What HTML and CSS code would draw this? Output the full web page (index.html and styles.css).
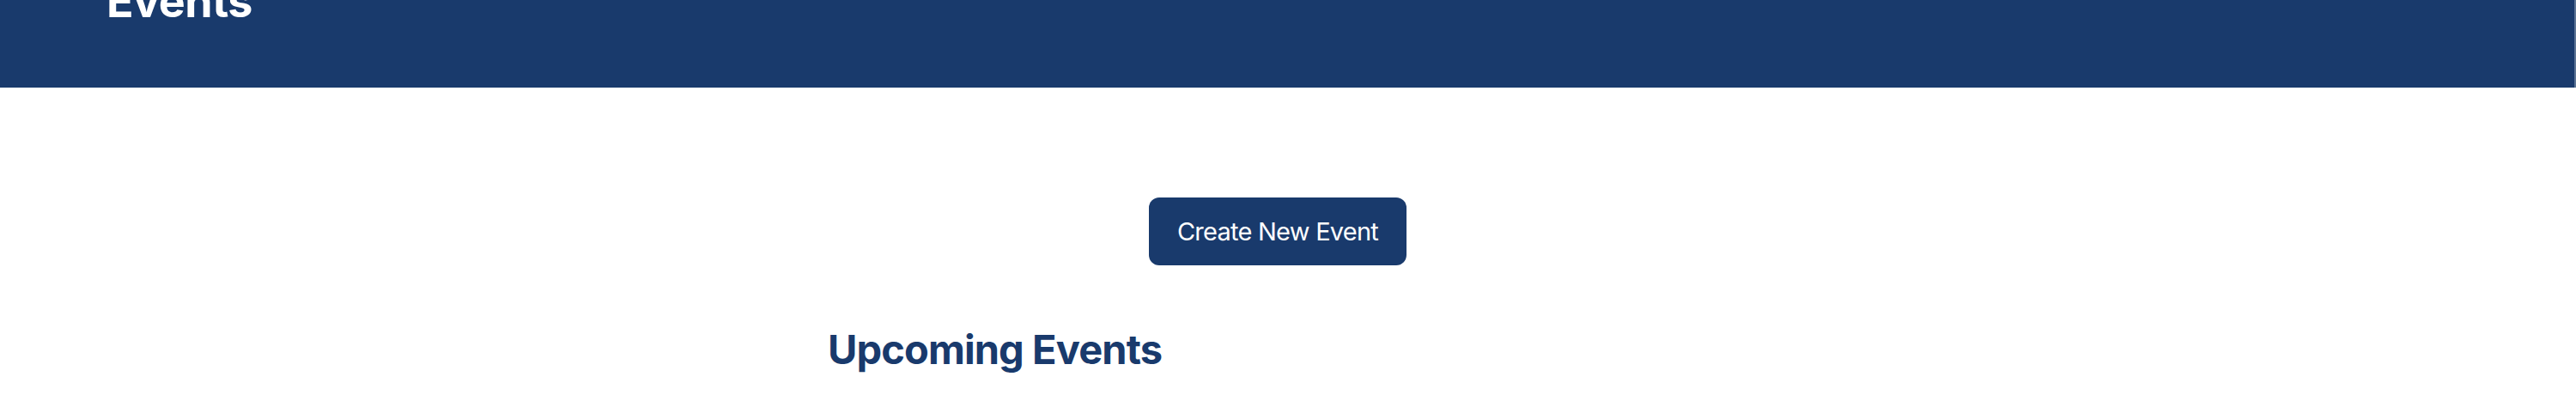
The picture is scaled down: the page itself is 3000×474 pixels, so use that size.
FILE: index.html
```html
<!DOCTYPE html>
<html>
<head>
<meta charset="utf-8">
<link rel="stylesheet" href="styles.css">
</head>
<body>
<header class="topbar">
  <h1 class="brand">Events</h1>
</header>
<main class="page">
  <div class="actions">
    <button class="btn-primary">Create New Event</button>
  </div>
  <section class="list">
    <h2 class="list-title">Upcoming Events</h2>
  </section>
</main>
</body>
</html>
```
FILE: styles.css
```css
html, body {
  margin: 0;
  padding: 0;
  background: #ffffff;
  font-family: Inter, "Noto Sans", sans-serif;
  overflow: hidden;
}
.topbar {
  height: 102px;
  background: #193a6c;
  box-sizing: border-box;
  border-right: 2px solid #5b7394;
  padding-left: 124px;
  overflow: hidden;
}
.brand {
  margin: -28px 0 0 0;
  font-size: 52px;
  line-height: 60px;
  font-weight: 700;
  color: #ffffff;
  letter-spacing: -0.5px;
}
.page {
  padding-right: 24px;
}
.actions {
  display: flex;
  justify-content: center;
  padding-top: 128px;
}
.btn-primary {
  background: #193a6c;
  color: #ffffff;
  border: none;
  border-radius: 12px;
  width: 300px;
  height: 79px;
  font-family: Inter, sans-serif;
  font-size: 29px;
  letter-spacing: -0.75px;
  font-weight: 400;
}
.list {
  width: 1056px;
  margin: 0 auto;
  padding-top: 70px;
}
.list-title {
  margin: 0;
  padding-left: 4px;
  font-size: 47px;
  line-height: 56px;
  font-weight: 700;
  color: #193a6c;
  letter-spacing: -0.9px;
}
```
